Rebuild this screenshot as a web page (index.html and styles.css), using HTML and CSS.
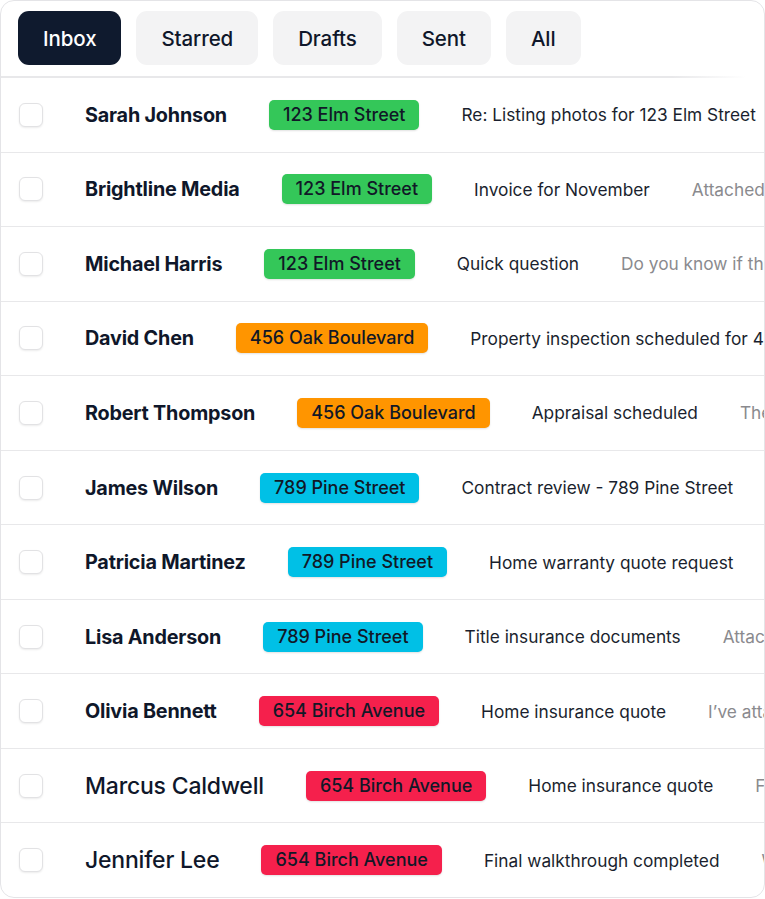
FILE: index.html
```html
<!DOCTYPE html>
<html lang="en">
<head>
<meta charset="utf-8">
<title>Inbox</title>
<link rel="stylesheet" href="styles.css">
</head>
<body>
<div class="card">
  <div class="tabs">
    <button class="tab active">Inbox</button>
    <button class="tab">Starred</button>
    <button class="tab">Drafts</button>
    <button class="tab">Sent</button>
    <button class="tab">All</button>
  </div>
  <div class="list">
    <div class="row"><span class="check"></span><span class="name">Sarah Johnson</span><span class="tag green">123 Elm Street</span><span class="subject">Re: Listing photos for 123 Elm Street</span><span class="preview">Here are the updated listing photos</span></div>
    <div class="row"><span class="check"></span><span class="name">Brightline Media</span><span class="tag green">123 Elm Street</span><span class="subject">Invoice for November</span><span class="preview">Attached is the invoice</span></div>
    <div class="row"><span class="check"></span><span class="name">Michael Harris</span><span class="tag green">123 Elm Street</span><span class="subject">Quick question</span><span class="preview">Do you know if the sellers</span></div>
    <div class="row"><span class="check"></span><span class="name">David Chen</span><span class="tag orange">456 Oak Boulevard</span><span class="subject">Property inspection scheduled for 456 Oak Boulevard</span><span class="preview">The inspection</span></div>
    <div class="row"><span class="check"></span><span class="name">Robert Thompson</span><span class="tag orange">456 Oak Boulevard</span><span class="subject">Appraisal scheduled</span><span class="preview">The appraiser will</span></div>
    <div class="row"><span class="check"></span><span class="name">James Wilson</span><span class="tag cyan">789 Pine Street</span><span class="subject">Contract review - 789 Pine Street</span><span class="preview">Please review</span></div>
    <div class="row"><span class="check"></span><span class="name">Patricia Martinez</span><span class="tag cyan">789 Pine Street</span><span class="subject">Home warranty quote request</span><span class="preview">Could you send</span></div>
    <div class="row"><span class="check"></span><span class="name">Lisa Anderson</span><span class="tag cyan">789 Pine Street</span><span class="subject">Title insurance documents</span><span class="preview">Attached are the</span></div>
    <div class="row"><span class="check"></span><span class="name">Olivia Bennett</span><span class="tag red">654 Birch Avenue</span><span class="subject">Home insurance quote</span><span class="preview">I’ve attached the quote</span></div>
    <div class="row"><span class="check"></span><span class="name name-lg">Marcus Caldwell</span><span class="tag red">654 Birch Avenue</span><span class="subject">Home insurance quote</span><span class="preview">Following up</span></div>
    <div class="row"><span class="check"></span><span class="name name-lg">Jennifer Lee</span><span class="tag red">654 Birch Avenue</span><span class="subject">Final walkthrough completed</span><span class="preview">We finished</span></div>
  </div>
</div>
</body>
</html>
```

FILE: styles.css
```css
* { box-sizing: border-box; }

html, body {
  margin: 0;
  padding: 0;
  background: #ffffff;
}

body {
  font-family: "Inter", "Liberation Sans", sans-serif;
  color: #0f172a;
}

.card {
  width: 765px;
  height: 898px;
  border: 1px solid #e4e4e7;
  border-radius: 14px;
  overflow: hidden;
  display: flex;
  flex-direction: column;
  background: #fff;
}

.tabs {
  position: relative;
  display: flex;
  gap: 15px;
  padding: 10px 17px 13px;
  flex: 0 0 auto;
}

.tabs::after {
  content: "";
  position: absolute;
  left: 0;
  right: 18px;
  bottom: 0;
  height: 2px;
  background: linear-gradient(to right, #e8e8ea 0%, #e8e8ea 90%, rgba(232,232,234,0) 100%);
}

.tab {
  height: 54px;
  border: none;
  border-radius: 11px;
  background: #f3f3f4;
  font-family: inherit;
  font-size: 20.5px;
  font-weight: 500;
  color: #0f172a;
  padding: 0 25px;
  letter-spacing: -0.1px;
}

.tab.active {
  background: #0f1a2e;
  color: #ffffff;
}

.list {
  flex: 1 1 auto;
  display: flex;
  flex-direction: column;
}

.row {
  flex: 1 1 0;
  display: flex;
  align-items: center;
  gap: 42px;
  padding-left: 18px;
  border-top: 1px solid #e8e8ea;
  white-space: nowrap;
  overflow: hidden;
}

.row:first-child { border-top: none; }

.check {
  flex: 0 0 auto;
  width: 24px;
  height: 24px;
  margin-right: 0;
  border: 1.5px solid #e2e2e4;
  border-radius: 6px;
  background: #fff;
  box-shadow: 0 1px 2px rgba(0,0,0,0.08);
}

.name {
  flex: 0 0 auto;
  font-size: 19.8px;
  font-weight: 700;
  letter-spacing: -0.2px;
}

.name-lg {
  font-size: 23px;
  font-weight: 500;
}

.tag {
  flex: 0 0 auto;
  height: 30px;
  line-height: 30px;
  padding: 0 14px;
  border-radius: 5px;
  font-size: 18px;
  font-weight: 500;
  color: #111827;
  box-shadow: 0 1px 2px rgba(0,0,0,0.12);
}

.green { background: #34c759; }
.orange { background: #ff9500; }
.cyan { background: #00c0e6; }
.red { background: #f5204c; }

.subject {
  flex: 0 0 auto;
  font-size: 17.3px;
  font-weight: 400;
  color: #1a1f2e;
}

.preview {
  flex: 0 0 auto;
  font-size: 17.3px;
  color: #8a8a8e;
}
```
